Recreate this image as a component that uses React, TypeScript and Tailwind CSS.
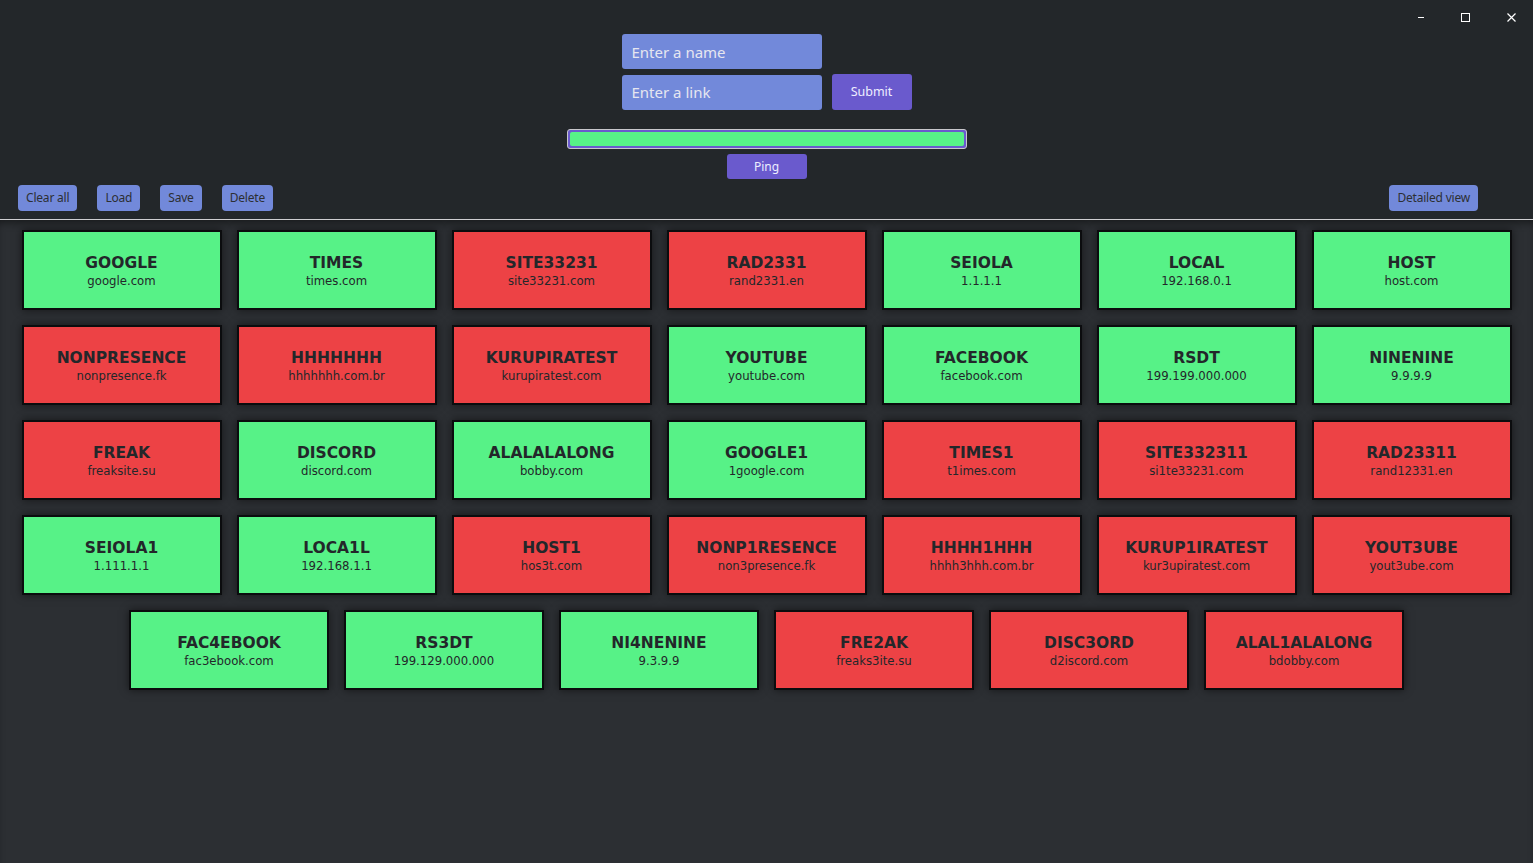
import React from 'react';

interface Site {
  name: string;
  link: string;
  up: boolean;
}

const sites: Site[] = [
  { name: 'GOOGLE', link: 'google.com', up: true },
  { name: 'TIMES', link: 'times.com', up: true },
  { name: 'SITE33231', link: 'site33231.com', up: false },
  { name: 'RAD2331', link: 'rand2331.en', up: false },
  { name: 'SEIOLA', link: '1.1.1.1', up: true },
  { name: 'LOCAL', link: '192.168.0.1', up: true },
  { name: 'HOST', link: 'host.com', up: true },
  { name: 'NONPRESENCE', link: 'nonpresence.fk', up: false },
  { name: 'HHHHHHH', link: 'hhhhhhh.com.br', up: false },
  { name: 'KURUPIRATEST', link: 'kurupiratest.com', up: false },
  { name: 'YOUTUBE', link: 'youtube.com', up: true },
  { name: 'FACEBOOK', link: 'facebook.com', up: true },
  { name: 'RSDT', link: '199.199.000.000', up: true },
  { name: 'NINENINE', link: '9.9.9.9', up: true },
  { name: 'FREAK', link: 'freaksite.su', up: false },
  { name: 'DISCORD', link: 'discord.com', up: true },
  { name: 'ALALALALONG', link: 'bobby.com', up: true },
  { name: 'GOOGLE1', link: '1google.com', up: true },
  { name: 'TIMES1', link: 't1imes.com', up: false },
  { name: 'SITE332311', link: 'si1te33231.com', up: false },
  { name: 'RAD23311', link: 'rand12331.en', up: false },
  { name: 'SEIOLA1', link: '1.111.1.1', up: true },
  { name: 'LOCA1L', link: '192.168.1.1', up: true },
  { name: 'HOST1', link: 'hos3t.com', up: false },
  { name: 'NONP1RESENCE', link: 'non3presence.fk', up: false },
  { name: 'HHHH1HHH', link: 'hhhh3hhh.com.br', up: false },
  { name: 'KURUP1IRATEST', link: 'kur3upiratest.com', up: false },
  { name: 'YOUT3UBE', link: 'yout3ube.com', up: false },
  { name: 'FAC4EBOOK', link: 'fac3ebook.com', up: true },
  { name: 'RS3DT', link: '199.129.000.000', up: true },
  { name: 'NI4NENINE', link: '9.3.9.9', up: true },
  { name: 'FRE2AK', link: 'freaks3ite.su', up: false },
  { name: 'DISC3ORD', link: 'd2iscord.com', up: false },
  { name: 'ALAL1ALALONG', link: 'bdobby.com', up: false },
];

const uiFont = { fontFamily: '"Noto Sans", "Open Sans", sans-serif' };

const SmallButton: React.FC<{ label: string }> = ({ label }) => (
  <button className="h-[26px] px-[8px] rounded-[4px] bg-[#7289da] text-[12px] tracking-[-0.2px] text-[#2c2f33] leading-none">
    {label}
  </button>
);

const SiteCard: React.FC<{ site: Site }> = ({ site }) => (
  <div
    className={`w-[200px] h-[80px] flex flex-col items-center justify-center border-2 border-[#0b0c0e] shadow-[0_0_8px_rgba(0,0,0,0.55)] text-[#23272a] font-['DejaVu_Sans',sans-serif] ${
      site.up ? 'bg-[#57f287]' : 'bg-[#ed4245]'
    }`}
  >
    <div className="pt-[3px] text-[15.5px] font-bold leading-[19px]">{site.name}</div>
    <div className="text-[13px] leading-[16px] font-stretch-condensed">{site.link}</div>
  </div>
);

export default function App() {
  return (
    <div className="w-full h-[863px] flex flex-col bg-[#2c2f33] overflow-hidden" style={uiFont}>
      {/* header */}
      <div className="relative h-[219px] shrink-0 bg-[#23272a]">
        <div className="absolute top-[13px] right-[17px] flex items-center gap-[37px] text-white">
          <span className="w-[6px] h-[1px] bg-white inline-block" />
          <span className="w-[9px] h-[9px] border border-white inline-block" />
          <svg width="9" height="9" viewBox="0 0 9 9">
            <path d="M0.5 0.5 L8.5 8.5 M8.5 0.5 L0.5 8.5" stroke="white" strokeWidth="1.2" />
          </svg>
        </div>

        <div className="flex flex-col items-center pt-[34px]">
          <div className="flex flex-col gap-[5px]">
            <input
              placeholder="Enter a name"
              className="w-[200px] h-[35px] rounded-[3px] bg-[#7289da] px-[10px] text-[15px] text-white placeholder:text-[#e6e6f0] outline-none"
            />
            <div className="flex items-center gap-[10px]">
              <input
                placeholder="Enter a link"
                className="w-[200px] h-[35px] rounded-[3px] bg-[#7289da] px-[10px] text-[15px] text-white placeholder:text-[#e6e6f0] outline-none"
              />
              <button className="w-[80px] h-[36px] rounded-[3px] bg-[#6a5acd] text-[12.5px] text-[#eeeeff]">
                Submit
              </button>
            </div>
          </div>

          <div className="mt-[19px] w-[400px] h-[20px] rounded-[3px] border border-[#c8c8cc] bg-[#6a5acd] p-[2px]">
            <div className="w-full h-full rounded-[2px] bg-[#57f287]" />
          </div>
          <button className="mt-[5px] w-[80px] h-[25px] rounded-[3px] bg-[#6a5acd] text-[12px] text-[#eeeeff]">
            Ping
          </button>
        </div>

        <div className="absolute left-[18px] right-[55px] top-[184px] flex items-center">
          <div className="flex gap-[20px]">
            <SmallButton label="Clear all" />
            <SmallButton label="Load" />
            <SmallButton label="Save" />
            <SmallButton label="Delete" />
          </div>
          <div className="ml-auto">
            <SmallButton label="Detailed view" />
          </div>
        </div>
      </div>
      <div className="h-[1px] shrink-0 bg-[#cfcfd2]" />

      {/* cards */}
      <div className="flex-1 shadow-[inset_0_6px_8px_-4px_rgba(0,0,0,0.5)] pt-[10px] px-[20px]">
        <div className="flex flex-wrap justify-center gap-[15px]">
          {sites.map((s) => (
            <SiteCard key={s.name} site={s} />
          ))}
        </div>
      </div>
    </div>
  );
}
